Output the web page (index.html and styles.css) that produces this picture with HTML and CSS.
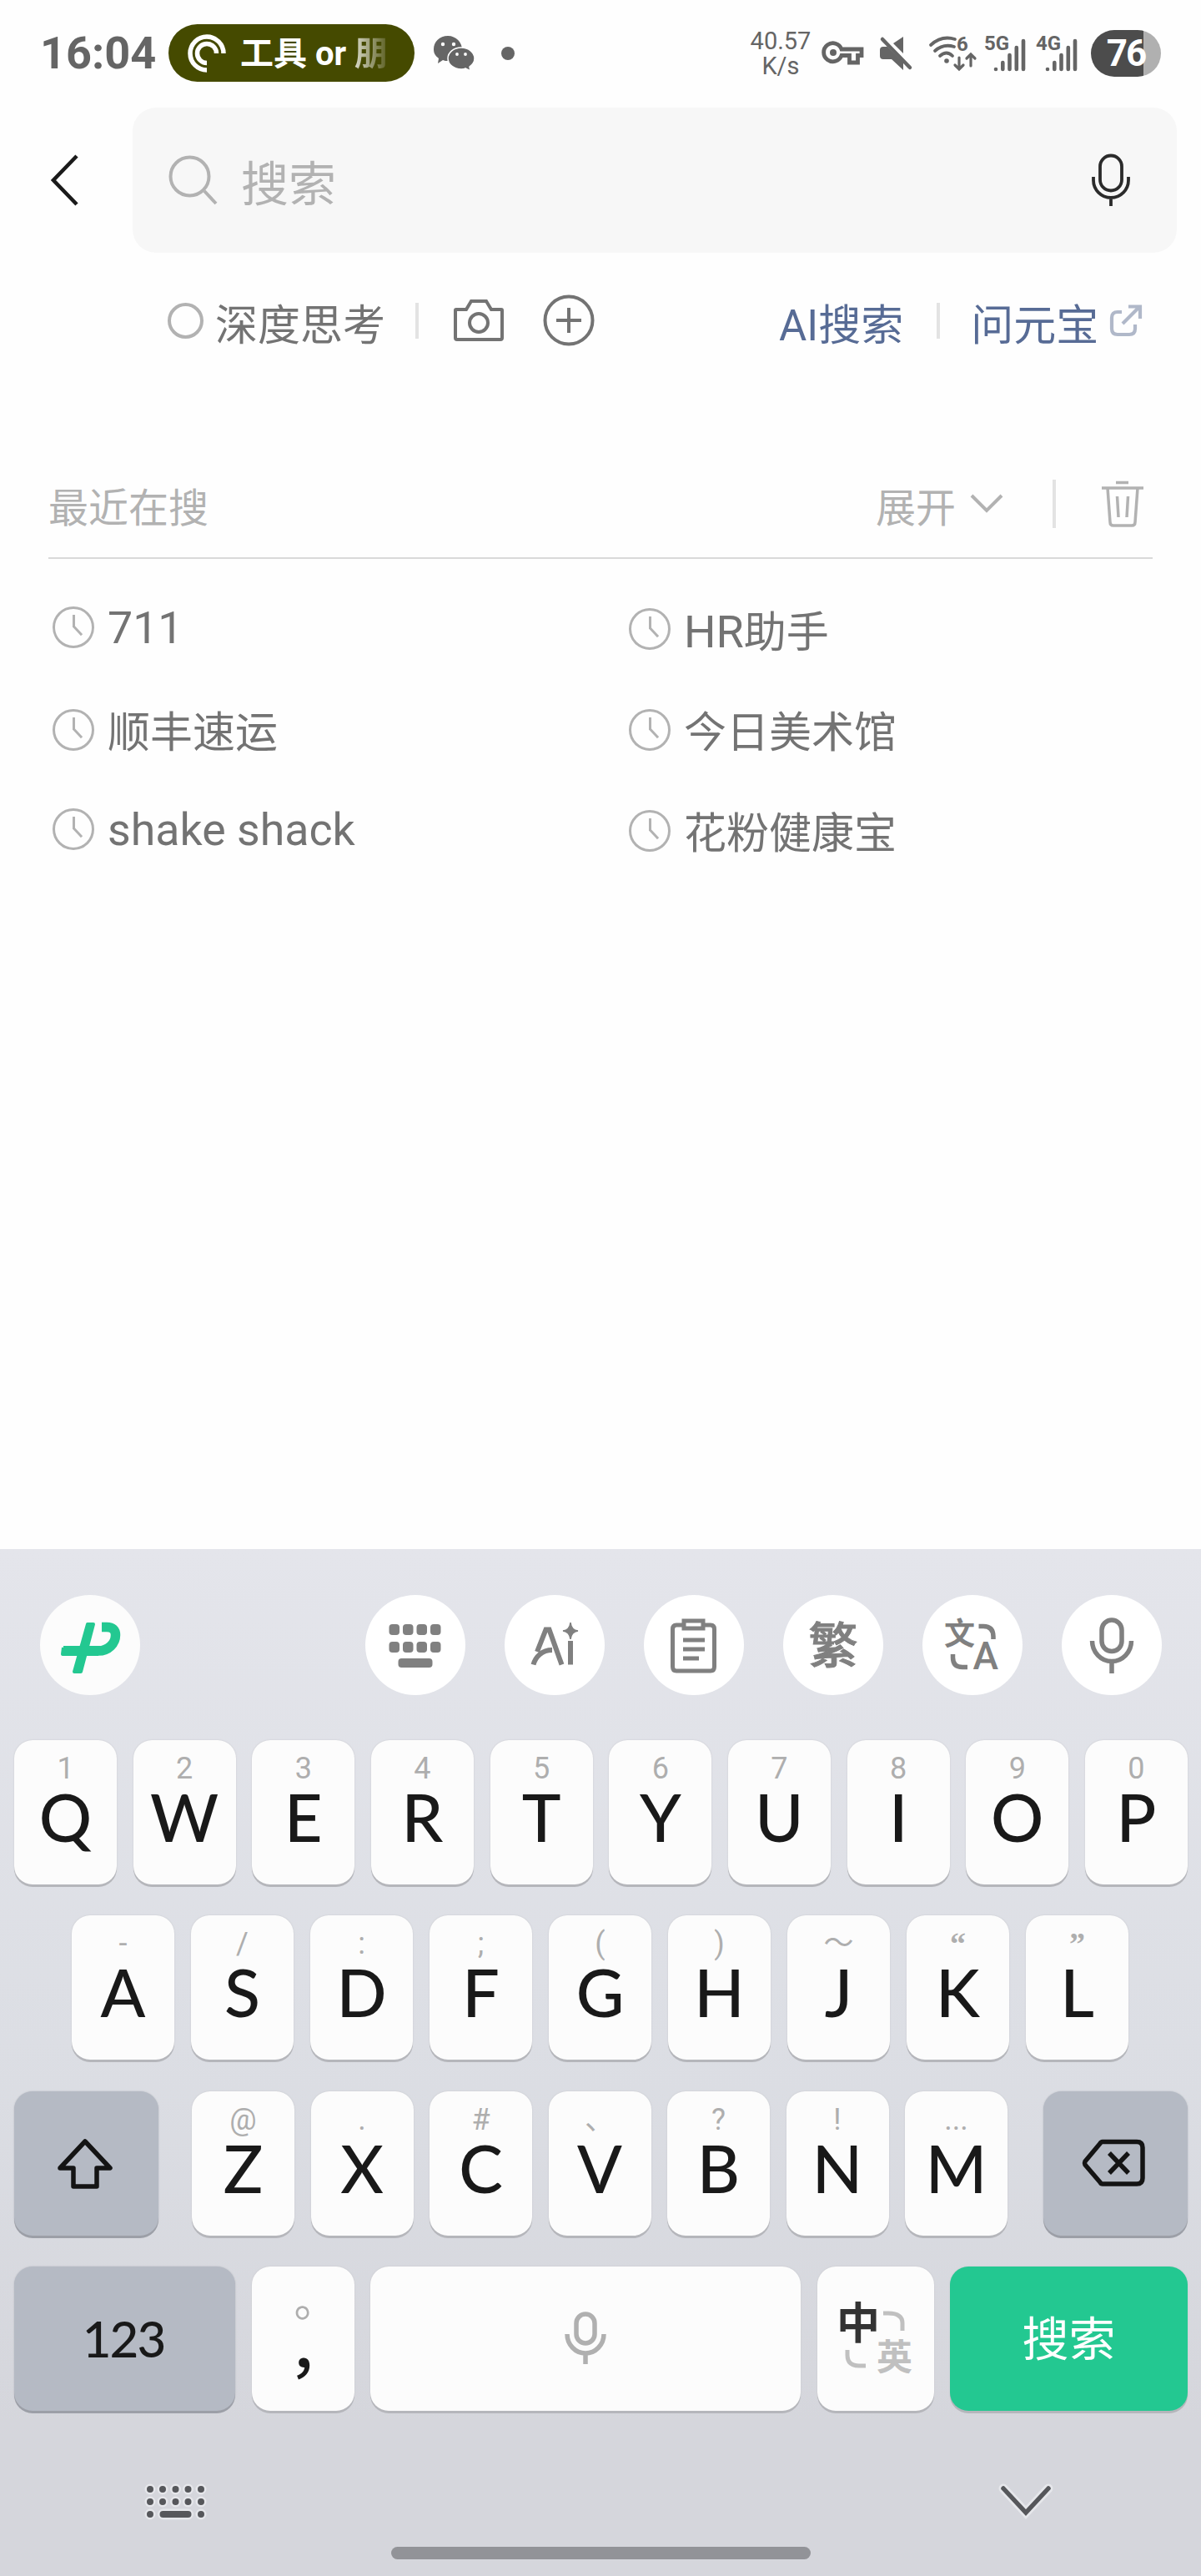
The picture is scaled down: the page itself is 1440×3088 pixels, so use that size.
FILE: index.html
```html
<!DOCTYPE html>
<html lang="zh-CN">
<head>
    <meta charset="utf-8">
    <title>搜索</title>
    <link rel="stylesheet" href="styles.css">
</head>
<body>
    <div class="status-bar">
        <div class="time">16:04</div>
        <div class="pill">
            <svg class="swirl" width="48" height="48" viewBox="0 0 48 48">
                <path d="M44 24A20 20 0 1 0 24 44M35.500 24A11.500 11.500 0 1 0 24 35.500" fill="none" stroke="#fff" stroke-width="5.500"/>
            </svg>
            <span>工具 or <span class="fade">朋</span></span>
        </div>
        <svg class="wechat" width="52" height="44" viewBox="0 0 52 44">
            <path d="M18 1C8 1 1 8 1 17c0 5 2 8 6 11l-1 6 6-4c2 1 4 1 6 1 9 0 17-6 17-14S28 1 18 1z" fill="#656565"/>
            <path d="M34 15C25 15 18 21 18 28s7 13 16 13c2 0 4 0 5-1l6 3-1-5c3-2 6-6 6-10 0-7-7-13-16-13z" fill="#656565" stroke="#fff" stroke-width="1.500"/>
            <g fill="#fff"><circle cx="12" cy="11" r="2.200"/><circle cx="25" cy="11" r="2.200"/><circle cx="29" cy="23" r="1.900"/><circle cx="39" cy="23" r="1.900"/></g>
        </svg>
        <div class="dot"></div>
        <div class="speed">40.57<br>K/s</div>
        <svg class="vpn" width="50" height="30" viewBox="0 0 50 30">
            <path d="M23 10H47V17.500H42.500V26H32.500V17.500H23A11 11 0 1 1 23 10z" fill="none" stroke="#656565" stroke-width="4.800"/>
            <circle cx="13" cy="14" r="4" fill="#656565"/>
        </svg>
        <svg class="mute" width="42" height="42" viewBox="0 0 42 42">
            <path d="M29 1V21L17 9zM1 17q0-4 4-4h5L29 32V41L15 28H5q-4 0-4-4z" fill="#656565"/>
            <path d="M6 3L40 37" stroke="#fefefe" stroke-width="4"/>
            <path d="M4 4L37 38" stroke="#656565" stroke-width="4.500" stroke-linecap="round"/>
        </svg>
        <svg class="wifi" width="58" height="44" viewBox="0 0 58 44">
            <g fill="none" stroke="#656565" stroke-width="3.800" stroke-linecap="round">
                <path d="M3 12Q16 0 32 5M8 19Q18 10 31 14M14 25Q22 18 29 25"/>
                <path d="M37 27V40M32 36l5 5 5-5M51 37V24M46 28l5-5 5 5" stroke-width="3.200"/>
            </g>
            <circle cx="22" cy="31" r="2.800" fill="#656565"/>
            <text x="34" y="19" class="mini">6</text>
        </svg>
        <svg class="signal" width="52" height="46" viewBox="0 0 52 46">
            <text x="0" y="19" class="mini">5G</text>
            <path d="M14 42v0M22.300 42v-8M30.500 42v-17M38.800 42v-26M47 42v-34" stroke="#656565" stroke-width="4.600" stroke-linecap="round"/>
        </svg>
        <svg class="signal" width="52" height="46" viewBox="0 0 52 46">
            <text x="0" y="19" class="mini">4G</text>
            <path d="M14 42v0M22.300 42v-8M30.500 42v-17M38.800 42v-26M47 42v-34" stroke="#656565" stroke-width="4.600" stroke-linecap="round"/>
        </svg>
        <div class="battery">76</div>
    </div>

    <div class="search-row">
        <svg class="back" width="36" height="64" viewBox="0 0 36 64">
            <path d="M32 3L4 32L32 61" fill="none" stroke="#1a1a1a" stroke-width="4.600"/>
        </svg>
        <div class="search-box">
            <svg width="60" height="62" viewBox="0 0 60 62">
                <path d="M43 44L57 59" stroke="#b2b2b2" stroke-width="4"/>
                <circle cx="25.500" cy="26.500" r="23" fill="none" stroke="#b2b2b2" stroke-width="4"/>
            </svg>
            <span class="placeholder">搜索</span>
            <svg width="48" height="64" viewBox="0 0 48 64" fill="none" stroke="#2b2b2b" stroke-width="3.800">
                <rect x="11" y="2.500" width="26" height="42" rx="13"/>
                <path d="M3 28v4a21 21 0 0 0 42 0v-4M24 53v10"/>
            </svg>
        </div>
    </div>

    <div class="tools">
        <div class="radio"></div>
        <span class="think">深度思考</span>
        <div class="line"></div>
        <svg class="camera" width="62" height="52" viewBox="0 0 62 52" fill="none" stroke="#737373" stroke-width="4">
            <path d="M4 13H16L22 3H40L46 13H58Q59 13 59 14V47Q59 49 57 49H5Q3 49 3 47V14Q3 13 4 13z"/>
            <circle cx="31" cy="29" r="11"/>
        </svg>
        <svg class="plus" width="62" height="62" viewBox="0 0 62 62" fill="none" stroke="#737373" stroke-width="4">
            <circle cx="31" cy="31" r="28.500"/>
            <path d="M31 16V46M16 31H46"/>
        </svg>
        <span class="link ai">AI搜索</span>
        <div class="line"></div>
        <span class="link yuanbao">问元宝</span>
        <svg class="out" width="40" height="40" viewBox="0 0 40 40" fill="none" stroke="#b0b8c9" stroke-width="4.200">
            <path d="M15 10H10Q3 10 3 17V30Q3 37 10 37H24Q31 37 31 30V25M16 24L36 4M23 3.500H37V18"/>
        </svg>
    </div>

    <div class="recent">
        <div class="recent-head">
            <span>最近在搜</span>
            <span class="expand">展开</span>
            <svg width="42" height="26" viewBox="0 0 42 26"><path d="M3 3L21 21L39 3" fill="none" stroke="#b2b2b2" stroke-width="4"/></svg>
            <div class="line tall"></div>
            <svg class="trash" width="52" height="58" viewBox="0 0 52 58" fill="none" stroke="#b2b2b2" stroke-width="3.500">
                <path d="M18 3.500H33M1 10H51M8 10L11 51Q11 55 15 55H37Q41 55 41 51L44 10M19.500 20L21 45M32.500 20L31 45"/>
            </svg>
        </div>
        <div class="history">
            <div class="column">
                <div class="item latin"><i class="clock"></i><span>711</span></div>
                <div class="item"><i class="clock"></i><span>顺丰速运</span></div>
                <div class="item latin"><i class="clock"></i><span>shake shack</span></div>
            </div>
            <div class="column">
                <div class="item"><i class="clock"></i><span><span class="hr">HR</span>助手</span></div>
                <div class="item"><i class="clock"></i><span>今日美术馆</span></div>
                <div class="item"><i class="clock"></i><span>花粉健康宝</span></div>
            </div>
        </div>
    </div>

    <div class="keyboard">
        <div class="toolbar">
            <div class="round logo">
                <svg width="120" height="120" viewBox="0 0 120 120">
                    <path d="M57 35H64L49 92H41z" fill="#23c891" stroke="#23c891" stroke-width="4" stroke-linejoin="round"/>
                    <path d="M28 63H72M28 63L27 71H70" fill="none" stroke="#23c891" stroke-width="4" stroke-linejoin="round"/>
                    <path d="M28 67H70C82 67 90.500 58 90.500 48C90.500 42 87 38.500 80 38.500H74" fill="none" stroke="#23c891" stroke-width="11.500"/>
                </svg>
            </div>
            <div class="round">
                <svg width="120" height="120" viewBox="0 0 120 120" fill="#808080">
                    <rect x="28.500" y="35" width="12.500" height="13" rx="4"/><rect x="45" y="35" width="12.500" height="13" rx="4"/><rect x="61.500" y="35" width="12.500" height="13" rx="4"/><rect x="78" y="35" width="12.500" height="13" rx="4"/>
                    <rect x="28.500" y="56" width="12.500" height="13" rx="4"/><rect x="45" y="56" width="12.500" height="13" rx="4"/><rect x="61.500" y="56" width="12.500" height="13" rx="4"/><rect x="78" y="56" width="12.500" height="13" rx="4"/>
                    <rect x="39.500" y="76" width="41" height="11" rx="4"/>
                </svg>
            </div>
            <div class="round">
                <svg width="120" height="120" viewBox="0 0 120 120" fill="none" stroke="#808080" stroke-width="6">
                    <path d="M39 68L49.500 41.500H53.500L68.500 83.500M34.500 83.500C37 74 45 66 57 66M79 55V83.500"/>
                    <path d="M79 33Q80 42 88 43Q80 44 79 53Q78 44 70 43Q78 42 79 33z" fill="#808080" stroke="#808080" stroke-width="1.500"/>
                </svg>
            </div>
            <div class="round">
                <svg width="120" height="120" viewBox="0 0 120 120" fill="none" stroke="#808080" stroke-width="5">
                    <path d="M46 36H39Q34.500 36 34.500 41V86Q34.500 91 39 91H80Q84.500 91 84.500 86V41Q84.500 36 80 36H73"/>
                    <rect x="48" y="31" width="23" height="9"/>
                    <path d="M47 54H73M47 65H73M47 76H66"/>
                </svg>
            </div>
            <div class="round fan">繁</div>
            <div class="round">
                <svg width="120" height="120" viewBox="0 0 120 120" fill="none" stroke="#808080" stroke-width="5.500">
                    <text x="26" y="60" class="wen">文</text>
                    <text x="60.500" y="89" class="letter-a">A</text>
                    <path d="M67.500 37.500H73Q85 37.500 85 50V53M36.500 71V75Q36.500 86.500 48 86.500H54"/>
                </svg>
            </div>
            <div class="round">
                <svg width="120" height="120" viewBox="0 0 120 120" fill="none" stroke="#808080" stroke-width="5.500">
                    <rect x="48" y="30" width="24" height="37.500" rx="12"/>
                    <path d="M36.500 55a23.500 24.500 0 0 0 47 0M60 80V94"/>
                </svg>
            </div>
        </div>

        <div class="row">
            <div class="key"><small>1</small>Q</div>
            <div class="key"><small>2</small>W</div>
            <div class="key"><small>3</small>E</div>
            <div class="key"><small>4</small>R</div>
            <div class="key"><small>5</small>T</div>
            <div class="key"><small>6</small>Y</div>
            <div class="key"><small>7</small>U</div>
            <div class="key"><small>8</small>I</div>
            <div class="key"><small>9</small>O</div>
            <div class="key"><small>0</small>P</div>
        </div>
        <div class="row middle">
            <div class="key"><small>-</small>A</div>
            <div class="key"><small>/</small>S</div>
            <div class="key"><small>:</small>D</div>
            <div class="key"><small>;</small>F</div>
            <div class="key"><small>(</small>G</div>
            <div class="key"><small>)</small>H</div>
            <div class="key"><small>～</small>J</div>
            <div class="key"><small class="quote">“</small>K</div>
            <div class="key"><small class="quote">”</small>L</div>
        </div>
        <div class="row">
            <div class="key dark shift">
                <svg width="72" height="64" viewBox="0 0 72 64"><path d="M36 6L66 38H50V60H22V38H6z" fill="none" stroke="#141414" stroke-width="5.500" stroke-linejoin="round"/></svg>
            </div>
            <div class="letters">
                <div class="key"><small>@</small>Z</div>
                <div class="key"><small>.</small>X</div>
                <div class="key"><small>#</small>C</div>
                <div class="key"><small>、</small>V</div>
                <div class="key"><small>?</small>B</div>
                <div class="key"><small>!</small>N</div>
                <div class="key"><small>...</small>M</div>
            </div>
            <div class="key dark shift back-key">
                <svg width="80" height="60" viewBox="0 0 80 60" fill="none" stroke="#141414" stroke-width="5.500">
                    <path d="M27 4.500H68Q75 4.500 75 11.500V48Q75 55 68 55H27Q25 55 24 53L6 32Q5 30 6 28L24 6.500Q25 4.500 27 4.500z"/>
                    <path d="M35 18L58 42M58 18L35 42"/>
                </svg>
            </div>
        </div>
        <div class="row">
            <div class="key dark num">123</div>
            <div class="key punct"><span class="stop">。</span><span class="comma">，</span></div>
            <div class="key space">
                <svg width="54" height="66" viewBox="0 0 54 66" fill="none" stroke="#b0b0b0" stroke-width="5.500">
                    <rect x="16" y="4" width="22" height="35" rx="11"/>
                    <path d="M5 28a22 23 0 0 0 44 0M27 51V64"/>
                </svg>
            </div>
            <div class="key lang">
                <svg width="90" height="96" viewBox="0 0 90 96">
                    <text x="-2" y="49" class="zh">中</text>
                    <text x="46" y="86" class="en">英</text>
                    <path d="M54 18H60Q77 18 77 30V39M11 62V68Q11 81 25 81H33" fill="none" stroke="#c0c0c0" stroke-width="5"/>
                </svg>
            </div>
            <div class="key go">搜索</div>
        </div>

        <div class="nav">
            <svg width="80" height="50" viewBox="0 0 80 50">
                <g fill="none" stroke-linecap="round">
                    <path d="M9 9h0M24 9h0M39.500 9h0M54.500 9h0M70 9h0M9 24h0M24 24h0M39.500 24h0M54.500 24h0M70 24h0M9 39h0M24.500 39h30M70 39h0" stroke="#e6e7eb" stroke-width="13"/>
                    <path d="M9 9h0M24 9h0M39.500 9h0M54.500 9h0M70 9h0M9 24h0M24 24h0M39.500 24h0M54.500 24h0M70 24h0M9 39h0M24.500 39h30M70 39h0" stroke="#56575b" stroke-width="8"/>
                </g>
            </svg>
            <svg width="70" height="46" viewBox="0 0 70 46">
                <path d="M8 8L35 37L62 8" fill="none" stroke="#e6e7eb" stroke-width="11" stroke-linecap="round"/>
                <path d="M8 8L35 37L62 8" fill="none" stroke="#56575b" stroke-width="5.500" stroke-linecap="round"/>
            </svg>
        </div>
        <div class="home"></div>
    </div>
</body>
</html>
```

FILE: styles.css
```css
* {
    box-sizing: border-box;
}

body {
    margin:0;
    width:1440px;
    height:3088px;
    display:flex;
    flex-direction:column;
    background:#fefefe;
    font-family:Roboto, "Noto Sans CJK SC", sans-serif;
    color:#737373;
    overflow:hidden;
}

svg {
    display:block;
    flex:none;
    overflow:visible;
}

/* Status bar */
.status-bar {
    height:127px;
    padding:0 48px;
    display:flex;
    align-items:center;
    color:#656565;
}

.time {
    width:154px;
    font-size:54px;
    font-weight:700;
    white-space:nowrap;
}

.pill {
    width:295px;
    height:69px;
    border-radius:35px;
    background:#454a00;
    color:#fff;
    display:flex;
    align-items:center;
    padding-left:22px;
    font-size:40px;
    font-weight:700;
    line-height:60px;
    white-space:nowrap;
}

.pill > span {
    padding-top:3px;
}

.swirl {
    margin-right:16px;
}

.fade {
    background:linear-gradient(90deg, #d8d9c8, #5a5e20);
    -webkit-background-clip:text;
    background-clip:text;
    color:transparent;
}

.wechat {
    margin-left:22px;
}

.dot {
    width:16px;
    height:16px;
    border-radius:50%;
    background:#656565;
    margin-left:30px;
}

.speed {
    width:80px;
    margin-left:279px;
    font-size:29px;
    line-height:30px;
    text-align:center;
}

.vpn { margin-left:10px; }
.mute { margin-left:18px; }
.wifi { margin-left:17px; }
.wifi + .signal { margin-left:9px; }
.signal { margin-left:10px; }

.mini {
    font-size:24px;
    font-weight:700;
    fill:#656565;
}

.battery {
    width:84px;
    height:56px;
    margin-left:14px;
    border-radius:28px;
    background:linear-gradient(90deg, #4c4c4c 63px, #b0b0b0 63px);
    color:#fff;
    font-size:44px;
    font-weight:700;
    line-height:56px;
    letter-spacing:-2px;
    text-align:center;
}

/* Search field */
.search-row {
    display:flex;
    align-items:center;
    margin-top:2px;
    height:174px;
}

.back {
    margin-left:60px;
}

.search-box {
    flex:1;
    height:174px;
    margin:0 29px 0 63px;
    padding:0 55px 0 43px;
    border-radius:28px;
    background:#f7f7f7;
    display:flex;
    align-items:center;
}

.placeholder {
    flex:1;
    margin-left:27px;
    font-size:57px;
    color:#b2b2b2;
}

.tools {
    display:flex;
    align-items:center;
    height:80px;
    margin-top:41px;
    padding-left:201px;
    font-size:51px;
}

.radio {
    width:43px;
    height:43px;
    border:4px solid #b2b2b2;
    border-radius:50%;
}

.think,
.link {
    padding-top:3px;
}

.think {
    margin:0 36px 0 14px;
}

.line {
    width:4px;
    height:43px;
    background:#e3e3e3;
}

.camera { margin-left:41px; }
.plus { margin-left:46px; }
.link { color:#576b95; }
.ai { margin:0 40px 0 221px; }
.yuanbao { margin:0 13px 0 37px; }

/* Recent searches */
.recent {
    height:1433px;
    padding:141px 58px 0;
}

.recent-head {
    height:105px;
    padding-bottom:26px;
    border-bottom:2px solid #d9d9d9;
    display:flex;
    align-items:center;
    font-size:48px;
    color:#b2b2b2;
}

.recent-head > span {
    padding-top:2px;
}

.expand {
    margin:0 16px 0 auto;
}

.tall {
    height:58px;
    margin:0 54px 0 58px;
}

.trash {
    margin-right:10px;
}

.history {
    display:grid;
    grid-template-columns:691px 1fr;
    padding-top:23px;
}

.item {
    display:flex;
    align-items:center;
    height:121px;
    padding-left:5px;
    font-size:51px;
    line-height:76px;
}

.item > span {
    padding-top:9px;
}

.latin {
    height:122px;
    font-size:53.700px;
}

.latin:first-child {
    height:121px;
    padding-bottom:4px;
}

.latin:last-child {
    height:117px;
}

.latin > span {
    padding-top:2px;
}

.hr {
    font-size:54px;
}

.clock {
    position:relative;
    width:50px;
    height:50px;
    margin-right:16px;
    border:3px solid #b2b2b2;
    border-radius:50%;
}

.clock::before,
.clock::after {
    content:"";
    position:absolute;
    left:21px;
    top:7px;
    width:3px;
    height:15px;
    background:#b2b2b2;
}

.clock::after {
    top:21px;
    height:14px;
    transform:rotate(-43deg);
    transform-origin:50% 0;
}

/* Keyboard */
.keyboard {
    flex:1;
    background:linear-gradient(#e4e5eb, #dcdee4 48%, #d5d6dc 85%);
}

.toolbar {
    display:flex;
    gap:47px;
    padding:55px 47px 54px 48px;
}

.round {
    width:120px;
    height:120px;
    border-radius:50%;
    background:#fff;
}

.logo {
    margin-right:auto;
    background:#fcfcfc;
}

.fan {
    font-size:59px;
    font-weight:500;
    line-height:123px;
    text-align:center;
    color:#808080;
    -webkit-text-stroke:1px #808080;
}

.wen {
    font-size:37px;
    font-weight:700;
    fill:#808080;
    stroke:none;
}

.letter-a {
    font-size:46px;
    font-weight:500;
    fill:#808080;
    stroke:none;
}

.row {
    display:flex;
    justify-content:space-between;
    height:173px;
    margin:0 16px 37.300px 17px;
}

.middle {
    margin-left:86px;
    margin-right:87px;
}

.letters {
    display:flex;
    justify-content:space-between;
    width:978px;
    margin-right:3px;
}

.key {
    width:123px;
    height:173px;
    padding-top:13px;
    border-radius:22px;
    background:#fcfcfc;
    box-shadow:0 3px 0 #b5b6bb, 0 0 2px #c4c5ca;
    font-family:Lato, "Noto Sans CJK SC", sans-serif;
    font-size:79px;
    font-weight:500;
    line-height:74px;
    text-align:center;
    color:#191919;
}

.key small {
    display:block;
    height:42px;
    font-family:Roboto, "Noto Sans CJK SC", sans-serif;
    font-size:36px;
    font-weight:400;
    line-height:42px;
    color:#aeaeae;
}

.key .quote {
    font-family:"Liberation Serif", serif;
    font-weight:700;
    font-size:38px;
}

.dark {
    background:#b5bac4;
    box-shadow:0 3px 0 #9c9fa7, 0 0 2px #b0b3bb;
}

.shift,
.num,
.space,
.lang,
.go {
    display:flex;
    align-items:center;
    justify-content:center;
    padding:0;
}

.shift {
    width:173px;
    padding-right:3px;
}

.back-key {
    padding-right:6px;
}

.num {
    width:265px;
    font-size:60px;
    letter-spacing:-2px;
    padding-right:3px;
}

.punct {
    padding:15px 0 0 32px;
    text-align:left;
}

.punct span {
    display:block;
}

.stop {
    height:50px;
    font-size:52px;
    font-weight:400;
    line-height:50px;
    color:#aeaeae;
    padding-left:19px;
}

.comma {
    height:60px;
    margin-top:3px;
    font-size:72px;
    line-height:60px;
    padding-left:12px;
}

.space { width:516px; }
.lang { width:140px; }

.zh {
    font-size:52px;
    font-weight:700;
    fill:#333;
}

.en {
    font-size:43px;
    font-weight:700;
    fill:#c0c0c0;
}

.go {
    width:285px;
    background:#23c891;
    color:#fff;
    font-size:56px;
    font-weight:400;
}

.nav {
    display:flex;
    justify-content:space-between;
    align-items:flex-start;
    height:126px;
    padding:48px 175px 0 171px;
}

.home {
    width:503px;
    height:15px;
    margin:0 auto;
    border-radius:8px;
    background:#929398;
}
```
